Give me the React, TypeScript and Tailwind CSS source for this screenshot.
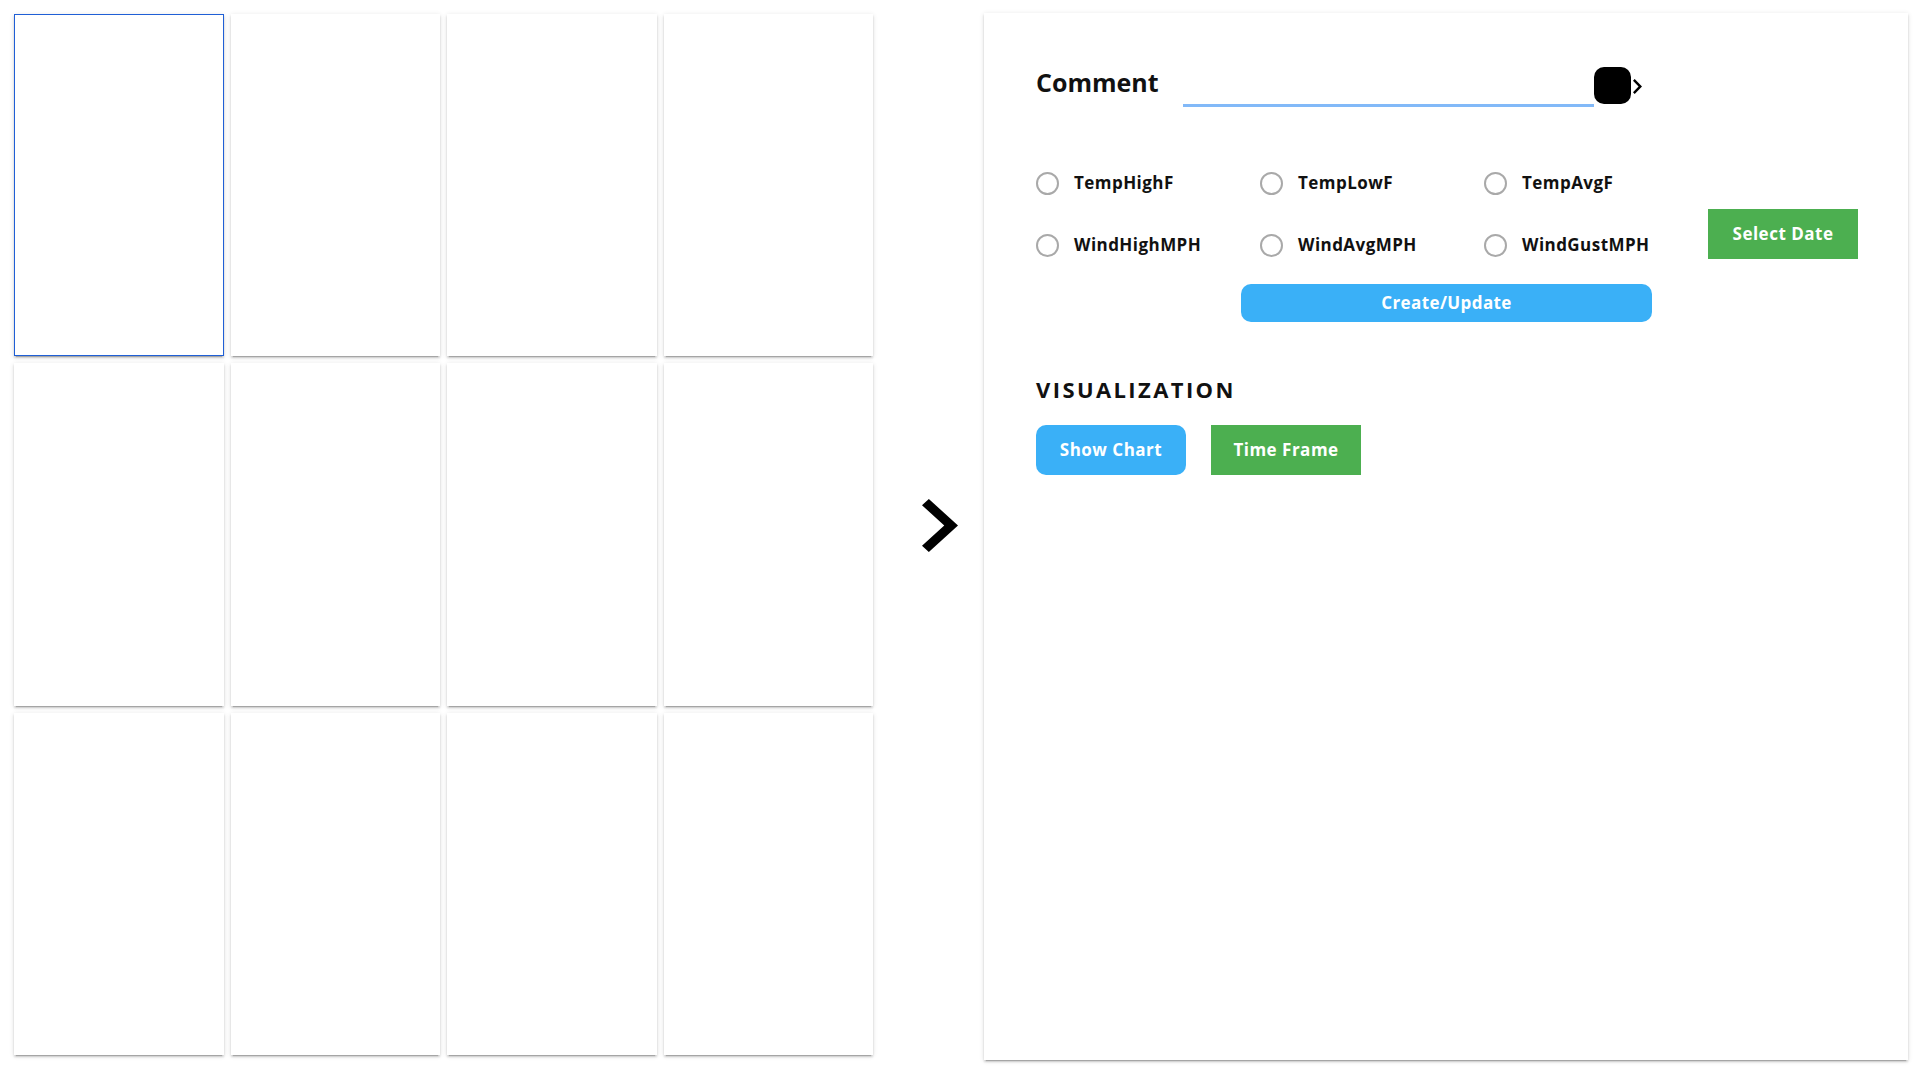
import { useState } from 'react';

const cardShadow =
  'shadow-[0px_3px_1px_-2px_rgba(0,0,0,0.2),0px_2px_2px_0px_rgba(0,0,0,0.14),0px_1px_5px_0px_rgba(0,0,0,0.12)]';

const fields = [
  'TempHighF',
  'TempLowF',
  'TempAvgF',
  'WindHighMPH',
  'WindAvgMPH',
  'WindGustMPH',
];

function ChevronRight({ className }: { className?: string }) {
  return (
    <svg viewBox="8.59 6 7.41 12" preserveAspectRatio="none" className={className}>
      <path d="M10 6 8.59 7.41 13.17 12l-4.58 4.59L10 18l6-6z" fill="currentColor" />
    </svg>
  );
}

export default function App() {
  const [selectedCard, setSelectedCard] = useState(0);
  const [field, setField] = useState('');
  const [comment, setComment] = useState('');

  return (
    <div className="flex h-[1080px] w-[1920px] bg-white font-['Open_Sans',sans-serif] text-[#111]">
      {/* Card grid */}
      <div className="ml-[14px] mt-[14px] grid h-[1041px] w-[859px] grid-cols-4 grid-rows-3 gap-[7px]">
        {Array.from({ length: 12 }).map((_, i) => (
          <div
            key={i}
            onClick={() => setSelectedCard(i)}
            className={`bg-white ${cardShadow} ${
              selectedCard === i ? 'border border-[#1f5fd6]' : ''
            }`}
          />
        ))}
      </div>

      {/* Arrow */}
      <div className="flex w-[111px] items-center pb-[29px] pl-[49px]">
        <ChevronRight className="h-[53px] w-[36px] text-black" />
      </div>

      {/* Editor panel */}
      <div className={`mt-[13px] h-[1047px] w-[924px] bg-white pl-[52px] pt-[54px] ${cardShadow}`}>
        <div className="flex items-start">
          <div className="mt-[-2px] w-[147px] text-[25px] font-bold leading-[34px]">
            Comment
          </div>
          <input
            value={comment}
            onChange={(e) => setComment(e.target.value)}
            className="mt-[13px] h-[27px] w-[411px] border-b-[3px] border-[#82b9f8] bg-transparent text-[16px] outline-none"
          />
          <div className="flex items-center">
            <div className="h-[37px] w-[37px] rounded-[10px] bg-black" />
            <ChevronRight className="ml-[2px] mt-[2px] h-[15px] w-[9px] text-black" />
          </div>
        </div>

        <div className="mt-[45px] flex items-start">
          <div className="grid w-[672px] grid-cols-3">
            {fields.map((f) => (
              <label key={f} className="flex h-[62px] cursor-pointer items-center">
                <span
                  onClick={() => setField(f)}
                  className={`flex h-[23px] w-[23px] items-center justify-center rounded-full border-[2.5px] ${
                    field === f ? 'border-[#3ab0f7]' : 'border-[#a9a9a9]'
                  }`}
                >
                  {field === f && <span className="h-[11px] w-[11px] rounded-full bg-[#3ab0f7]" />}
                </span>
                <span className="ml-[15px] text-[17px] font-bold tracking-[0.45px]">{f}</span>
              </label>
            ))}
          </div>
          <button className="mt-[57px] h-[50px] w-[150px] bg-[#4caf50] text-[17px] font-bold tracking-[0.5px] text-white">
            Select Date
          </button>
        </div>

        <div className="ml-[205px] mt-[8px]">
          <button className="h-[38px] w-[411px] rounded-[10px] bg-[#3ab0f7] text-[17px] font-bold tracking-[0.4px] text-white">
            Create/Update
          </button>
        </div>

        <h2 className="mt-[52px] text-[22px] font-bold leading-[30px] tracking-[2.4px]">VISUALIZATION</h2>

        <div className="mt-[21px] flex gap-[25px]">
          <button className="h-[50px] w-[150px] rounded-[10px] bg-[#3ab0f7] text-[17px] font-bold tracking-[0.5px] text-white">
            Show Chart
          </button>
          <button className="h-[50px] w-[150px] bg-[#4caf50] text-[17px] font-bold tracking-[0.5px] text-white">
            Time Frame
          </button>
        </div>
      </div>
    </div>
  );
}
